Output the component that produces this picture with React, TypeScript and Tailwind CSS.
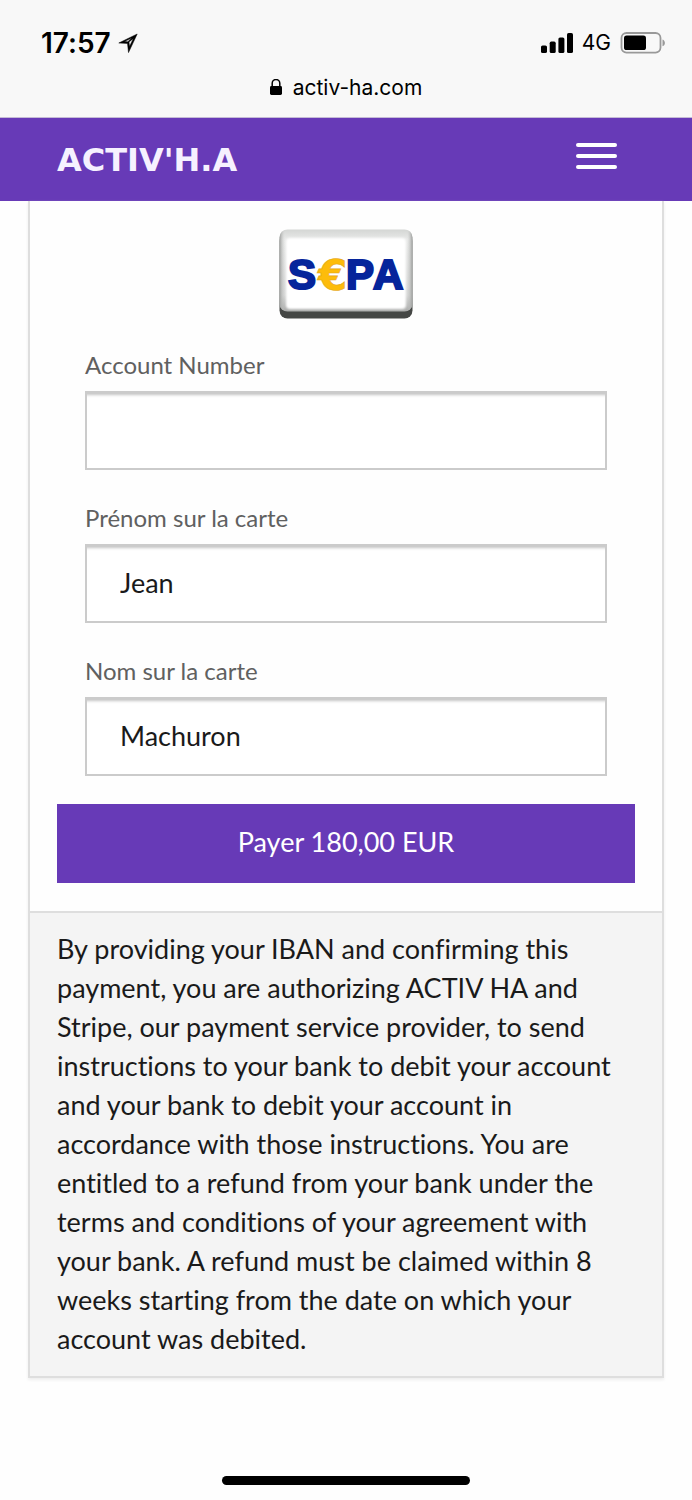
import { useState } from "react";

function StatusBar() {
  return (
    <div className="flex h-[70px] items-center justify-between pt-4 pr-[27px] pl-[41px]">
      <div className="flex items-center gap-[7px]">
        <time className="text-[28px] leading-8 font-semibold">17:57</time>
        <svg width="20" height="20" viewBox="0 0 20 20" aria-hidden="true">
          <path
            fillRule="evenodd"
            stroke="#000"
            strokeWidth="0.5"
            d="M19.2 1 .8 10l8.7.4 1 9.2zM15.4 5.4 11 9l.5 4.4zM13.8 5.1 6.4 8.6l3.4.2z"
          />
        </svg>
      </div>
      <div className="flex items-center gap-[9px]">
        <svg width="32" height="20" viewBox="0 0 32 20" aria-hidden="true">
          <rect x="0" y="12.5" width="6" height="7.5" rx="1.6" />
          <rect x="8.7" y="8.6" width="6" height="11.4" rx="1.6" />
          <rect x="17.4" y="4.5" width="6" height="15.5" rx="1.6" />
          <rect x="26" y="0" width="6" height="20" rx="1.6" />
        </svg>
        <span className="text-[21px] leading-8">4G</span>
        <svg width="45" height="22" viewBox="0 0 45 22" aria-hidden="true">
          <rect x="1.5" y="1" width="39" height="19.6" rx="5" fill="none" stroke="#999" strokeWidth="1.8" />
          <rect x="4" y="3.6" width="22" height="14.4" rx="2.6" />
          <path d="M42.5 7.5c3.2 1.3 3.2 5.5 0 6.8z" fill="#999" />
        </svg>
      </div>
    </div>
  );
}

function AddressBar() {
  return (
    <div className="flex h-[47px] items-center justify-center gap-[11px] pb-3">
      <svg width="12" height="17" viewBox="0 0 12 17" aria-hidden="true">
        <rect x="0" y="7" width="12" height="9" rx="1.4" />
        <path d="M2.2 8V4.3a3.8 3.8 0 0 1 7.6 0V8" fill="none" stroke="#000" strokeWidth="1.5" />
      </svg>
      <span className="text-[21px] leading-8">activ-ha.com</span>
    </div>
  );
}

function SepaLogo() {
  return (
    <svg className="mx-auto block" width="134" height="90" viewBox="0 0 134 90" role="img" aria-label="SEPA">
      <defs>
        <linearGradient id="edge" x1="0" y1="0" x2="0" y2="1">
          <stop offset="0" stopColor="#d4d6d4" />
          <stop offset="0.12" stopColor="#e8e9e8" />
          <stop offset="0.8" stopColor="#d4d5d4" />
          <stop offset="1" stopColor="#a9aaa9" />
        </linearGradient>
        <linearGradient id="side" x1="0" y1="0" x2="1" y2="0">
          <stop offset="0" stopColor="#9b9d9b" />
          <stop offset="0.04" stopColor="#d0d1d0" stopOpacity="0" />
          <stop offset="0.96" stopColor="#d0d1d0" stopOpacity="0" />
          <stop offset="1" stopColor="#9b9d9b" />
        </linearGradient>
        <filter id="soft"><feGaussianBlur stdDeviation="1" /></filter>
      </defs>
      <rect x="0.5" y="4" width="133" height="85.5" rx="8" fill="#454745" />
      <rect x="0.5" y="0.5" width="133" height="82" rx="8" fill="url(#edge)" />
      <rect x="0.5" y="0.5" width="133" height="82" rx="8" fill="url(#side)" />
      <rect x="7" y="9" width="120" height="71" rx="4" fill="#fff" filter="url(#soft)" />
      <g fontFamily="'Liberation Sans', Arial, sans-serif" fontWeight="700" fontSize="42">
        <text x="39" y="61" fontFamily="'DejaVu Sans', sans-serif" fill="#fdbc0b" stroke="#e3a51a" strokeWidth="0.6">€</text>
        <g fill="#06259b" stroke="#06259b" strokeWidth="2.2">
          <text x="9" y="60">S</text>
          <text x="67" y="60">P</text>
          <text x="94" y="60">A</text>
        </g>
      </g>
    </svg>
  );
}

interface FieldProps {
  id: string;
  label: string;
  initial?: string;
}

function Field({ id, label, initial = "" }: FieldProps) {
  const [value, setValue] = useState(initial);
  return (
    <div className="flex flex-col gap-2">
      <label htmlFor={id} className="text-[24px] leading-9 text-[#606060]">{label}</label>
      <input
        id={id}
        type="text"
        value={value}
        onChange={(e) => setValue(e.target.value)}
        className="h-[79px] w-full border-2 border-[#cbcbcb] bg-white px-[33px] pb-[2px] text-[27px] text-[#1a1a1a] shadow-[inset_0_5px_3px_-3px_#c4c4c4] outline-none"
      />
    </div>
  );
}

export default function App() {
  return (
    <div className="flex min-h-screen flex-col bg-[#fefefe] font-['Lato',sans-serif] text-[#1a1a1a] [font-variant-ligatures:none]">
      <div className="border-b border-[#c5bbd6] bg-[#f8f8f8] font-['Inter',sans-serif] text-black">
        <StatusBar />
        <AddressBar />
      </div>

      <header className="flex h-[83px] items-center justify-between bg-[#673ab7] pr-[75px] pl-[57px]">
        <a href="#" className="font-['DejaVu_Sans',sans-serif] text-[32px] leading-9 font-bold text-[#f6f1ff]">ACTIV'H.A</a>
        <button type="button" aria-label="Menu" className="flex flex-col gap-[7px] pb-2">
          <span className="h-1 w-[41px] rounded-full bg-white" />
          <span className="h-1 w-[41px] rounded-full bg-white" />
          <span className="h-1 w-[41px] rounded-full bg-white" />
        </button>
      </header>

      <main className="mx-7 border-2 border-t-0 border-[#dedede] bg-[#fefefe] shadow-[0_2px_3px_#eeeeee]">
        <form onSubmit={(e) => e.preventDefault()} className="flex flex-col gap-7 px-[27px] pt-7 pb-7">
          <SepaLogo />
          <div className="flex flex-col gap-[30px] px-7">
            <Field id="account" label="Account Number" />
            <Field id="first-name" label="Prénom sur la carte" initial="Jean" />
            <Field id="last-name" label="Nom sur la carte" initial="Machuron" />
          </div>
          <button type="submit" className="h-[79px] w-full bg-[#673ab7] pb-[2px] text-[27px] text-white">Payer 180,00 EUR</button>
        </form>
        <p className="border-t-2 border-[#dedede] bg-[#f4f4f4] px-[27px] pt-4 pb-[18px] text-[27px] leading-[39px]">
          By providing your IBAN and confirming this payment, you are authorizing ACTIV HA and Stripe, our payment
          service provider, to send instructions to your bank to debit your account and your bank to debit your
          account in accordance with those instructions. You are entitled to a refund from your bank under the terms
          and conditions of your agreement with your bank. A refund must be claimed within 8 weeks starting from the
          date on which your account was debited.
        </p>
      </main>

      <div className="mx-auto mt-auto mb-[15px] h-[9px] w-[248px] rounded-full bg-black" />
    </div>
  );
}
